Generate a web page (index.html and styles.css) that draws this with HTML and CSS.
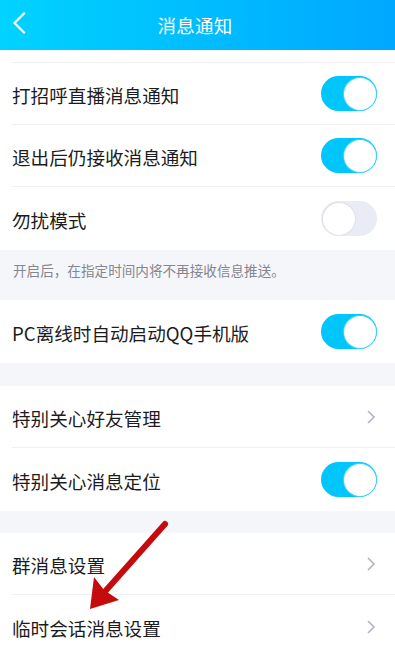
FILE: index.html
```html
<!DOCTYPE html>
<html lang="zh-CN">
<head>
<meta charset="utf-8">
<title>消息通知</title>
<link rel="stylesheet" href="styles.css">
</head>
<body>
<div class="page">
  <header class="topbar">
    <svg class="back" width="40" height="50" viewBox="0 0 40 50"><path d="M24 13.5 L14.5 23 L24 32.5" fill="none" stroke="#fff" stroke-width="2.2" stroke-linecap="square"/></svg>
    <div class="title">消息通知</div>
  </header>

  <section class="group">
    <div class="row"><div class="cell stub"></div></div>
    <div class="row"><div class="cell"><span class="label">打招呼直播消息通知</span><span class="switch on"></span></div></div>
    <div class="row"><div class="cell"><span class="label">退出后仍接收消息通知</span><span class="switch on"></span></div></div>
    <div class="row"><div class="cell last"><span class="label">勿扰模式</span><span class="switch"></span></div></div>
  </section>
  <div class="note">开启后，在指定时间内将不再接收信息推送。</div>

  <section class="group">
    <div class="row"><div class="cell last"><span class="label">PC离线时自动启动QQ手机版</span><span class="switch on"></span></div></div>
  </section>
  <div class="gap"></div>

  <section class="group">
    <div class="row"><div class="cell"><span class="label">特别关心好友管理</span><svg class="chev" width="10" height="16" viewBox="0 0 10 16"><path d="M2 2 L8 8 L2 14" fill="none" stroke="#b3b3c3" stroke-width="1.6"/></svg></div></div>
    <div class="row"><div class="cell last"><span class="label">特别关心消息定位</span><span class="switch on"></span></div></div>
  </section>
  <div class="gap short"></div>

  <section class="group">
    <div class="row"><div class="cell"><span class="label">群消息设置</span><svg class="chev" width="10" height="16" viewBox="0 0 10 16"><path d="M2 2 L8 8 L2 14" fill="none" stroke="#b3b3c3" stroke-width="1.6"/></svg></div></div>
    <div class="row"><div class="cell last"><span class="label">临时会话消息设置</span><svg class="chev" width="10" height="16" viewBox="0 0 10 16"><path d="M2 2 L8 8 L2 14" fill="none" stroke="#b3b3c3" stroke-width="1.6"/></svg></div></div>
  </section>

  <svg class="arrow" width="395" height="654" viewBox="0 0 395 654">
    <line x1="165" y1="524" x2="101" y2="596" stroke="#c40c0c" stroke-width="6" stroke-linecap="round"/>
    <polygon points="90,609 94,577 104,590 119,600" fill="#c40c0c"/>
  </svg>
</div>
</body>
</html>
```
FILE: styles.css
```css
* { box-sizing: border-box; }
html, body { margin: 0; padding: 0; }
body {
  font-family: "Noto Sans CJK SC", "Noto Sans", sans-serif;
  background: #f5f6fa;
  color: #1c1c1e;
}
.page {
  position: relative;
  width: 395px;
  height: 654px;
  overflow: hidden;
  background: #f5f6fa;
}
.topbar {
  height: 50px;
  background: linear-gradient(90deg, #00d3ff 0%, #00bdff 50%, #00a8ff 100%);
  display: flex;
  align-items: center;
  justify-content: center;
  position: relative;
}
.back {
  position: absolute;
  left: 0;
  top: 0;
}
.title {
  color: #fff;
  font-size: 18.5px;
  line-height: 50px;
  letter-spacing: 0.2px;
  margin-left: -5px;
}
.group {
  background: #fff;
}
.row {
  padding-left: 12px;
}
.cell {
  height: 62px;
  display: flex;
  align-items: center;
  justify-content: space-between;
  padding-right: 18px;
  border-bottom: 1px solid #efeff4;
}
.cell.stub {
  height: 13px;
}
.cell.last {
  border-bottom: none;
  height: 63px;
}
.label {
  font-size: 18.6px;
  line-height: 1;
  padding-top: 3px;
  color: #1c1c1e;
}
.switch {
  width: 56px;
  height: 35px;
  border-radius: 18px;
  background: #e9ebf5;
  position: relative;
  flex: none;
}
.switch::after {
  content: "";
  position: absolute;
  top: 1.5px;
  left: 1.5px;
  width: 32px;
  height: 32px;
  border-radius: 50%;
  background: #fff;
  box-shadow: 0 0 0 1px #dfe0ea;
}
.switch.on {
  background: #00c6fd;
}
.switch.on::after {
  left: 22.5px;
  box-shadow: 0 0 0 1px #3fd3ff;
}
.chev {
  margin-right: 1px;
  flex: none;
}
.note {
  height: 50px;
  padding: 11px 0 0 13px;
  font-size: 13.6px;
  color: #85858f;
  line-height: 18px;
}
.gap {
  height: 23px;
}
.gap.short {
  height: 22px;
}
.arrow {
  position: absolute;
  left: 0;
  top: 0;
  pointer-events: none;
}
```
